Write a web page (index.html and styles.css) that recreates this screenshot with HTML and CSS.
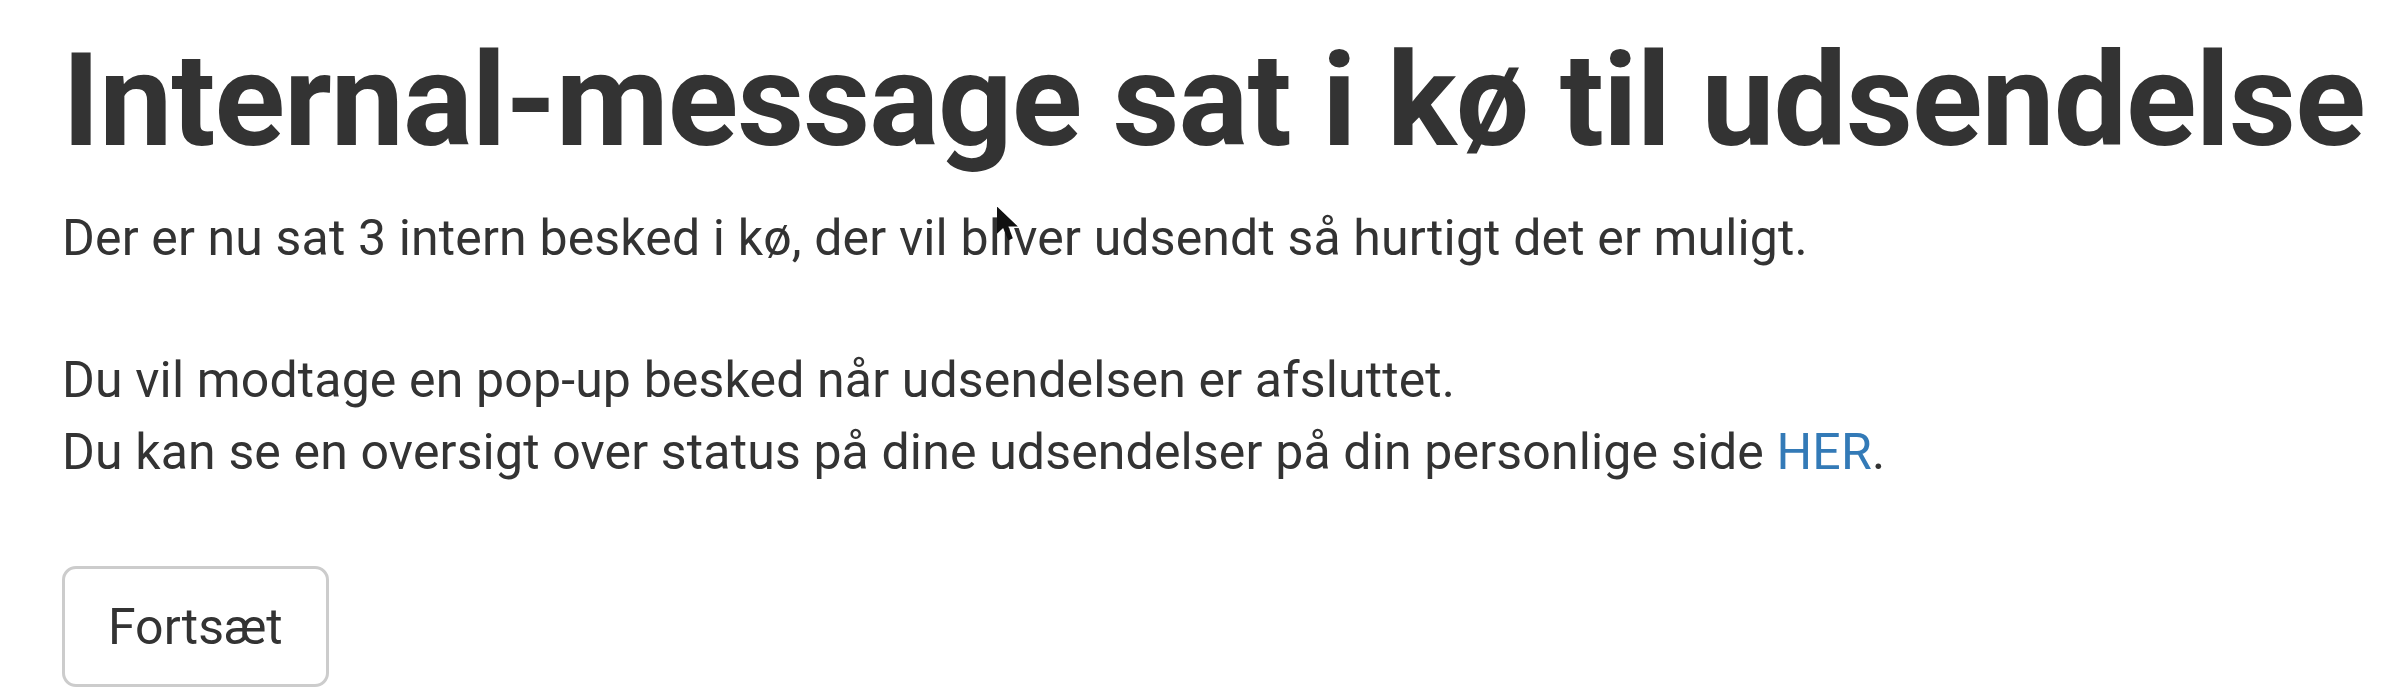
FILE: index.html
```html
<!DOCTYPE html>
<html lang="da">
<head>
    <meta charset="UTF-8">
    <title>Internal-message sat i kø</title>
    <link rel="stylesheet" href="styles.css">
</head>
<body>
<div class="container">
    <h1>Internal-message sat i kø til udsendelse</h1>
    <p>
        Der er nu sat 3 intern besked i kø, der vil bl<span class="pointer"><span class="arrow"></span></span>iver udsendt så hurtigt det er muligt.<br><br>
        Du vil modtage en pop-up besked når udsendelsen er afsluttet.<br>
        Du kan se en oversigt over status på dine udsendelser på din personlige side <a href="#">HER</a>.
    </p>
    <div class="actions">
        <button class="btn">Fortsæt</button>
    </div>
</div>
</body>
</html>
```

FILE: styles.css
```css
* {
    box-sizing: border-box;
}

body {
    margin: 0;
    background-color: #fff;
    color: #333;
    font-family: Roboto, "Liberation Sans", sans-serif;
    font-size: 50px;
    line-height: 1.42857;
}

.container {
    padding: 29px 0 0 62px;
}

h1 {
    margin: 0 0 30px;
    font-size: 130.5px;
    font-weight: 700;
    line-height: 1.1;
    letter-spacing: -1px;
}

p {
    margin: 0 0 78px;
    letter-spacing: 0.15px;
}

a {
    color: #337ab7;
    text-decoration: none;
}

/* mouse pointer resting over the first line */
.pointer {
    position: relative;
    display: inline-block;
    width: 0;
    height: 0;
}

.arrow {
    position: absolute;
    left: -4px;
    top: -48px;
    width: 22px;
    height: 34px;
    background: #111;
    clip-path: polygon(0 0, 0 80%, 28% 63%, 52% 100%, 72% 93%, 52% 59%, 95% 59%);
    z-index: 1;
}

.btn {
    display: inline-block;
    height: 121px;
    padding: 0 43px;
    font-family: inherit;
    font-size: 50px;
    color: #333;
    background-color: #fff;
    border: 3px solid #ccc;
    border-radius: 14px;
}
```
